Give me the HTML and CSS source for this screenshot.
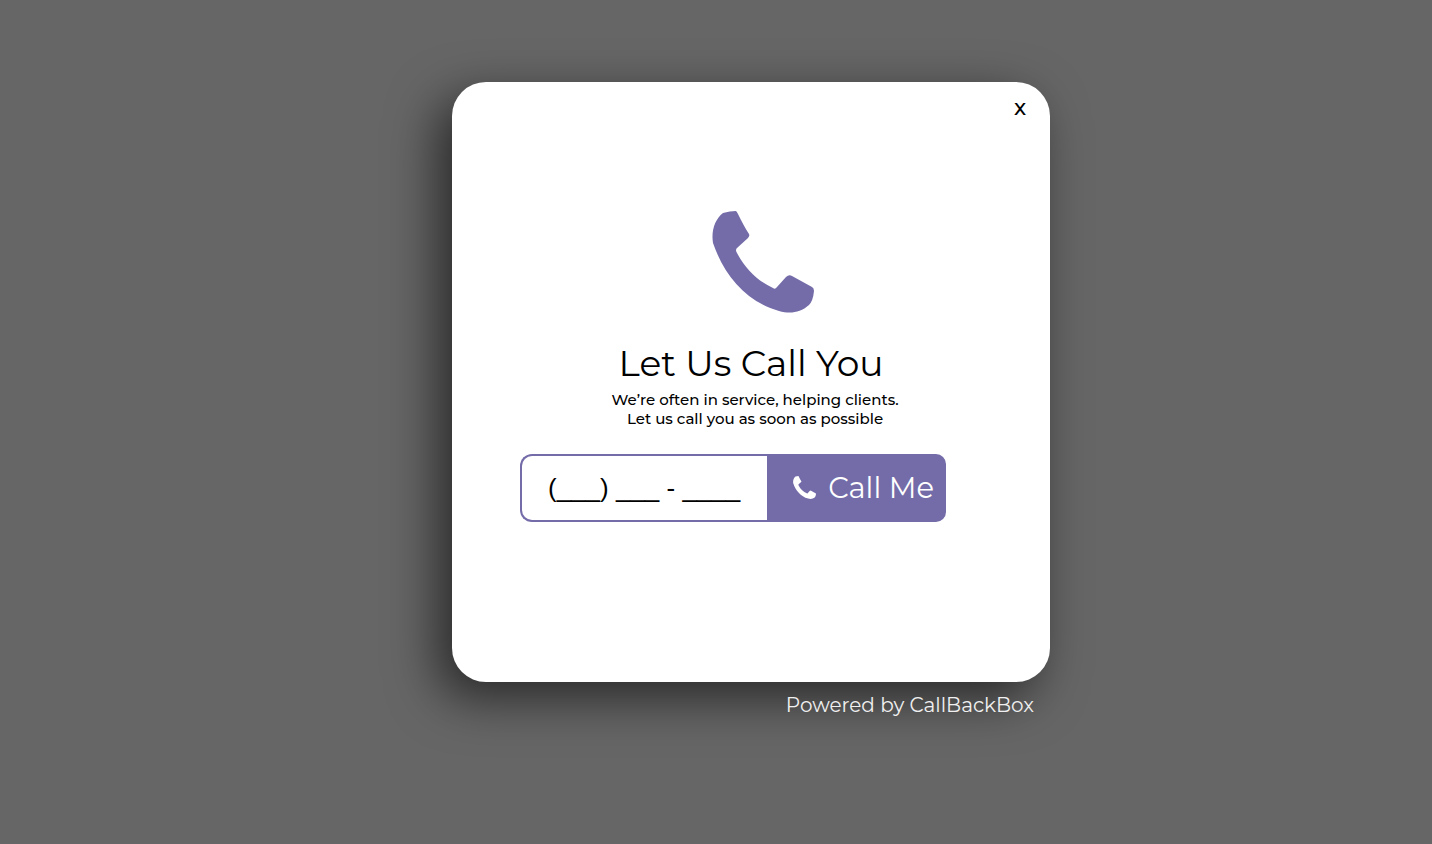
FILE: index.html
```html
<!DOCTYPE html>
<html lang="en">
<head>
<meta charset="utf-8">
<meta name="viewport" content="width=device-width, initial-scale=1">
<title>CallBackBox</title>
<link rel="stylesheet" href="styles.css">
</head>
<body>
<svg class="sprite" aria-hidden="true">
  <symbol id="phone" viewBox="0 0 102 102">
    <path d="M11 2Q18 0 24 0Q25 1 26 3C30 11 33 17 37 23Q38 25 36 27L25 37Q23 39 25 42C34 59 46 70 61 77Q63 79 65 76L74 66Q77 63 80 65L100 76Q102 77 102 80Q101 90 97 94C88 102 78 103 67 100C34 91 12 64 1 32C-1 20 3 8 11 2Z"/>
  </symbol>
</svg>
<div class="overlay">
  <main class="widget">
    <section class="card" role="dialog" aria-labelledby="title">
      <button class="close" type="button" aria-label="Close">x</button>
      <svg class="hero-icon" aria-hidden="true"><use href="#phone"/></svg>
      <h1 class="title" id="title">Let Us Call You</h1>
      <p class="lead">We’re often in service, helping clients.<br>Let us call you as soon as possible</p>
      <form class="call-form">
        <input class="phone-input" type="tel" aria-label="Phone number" value="(___) ___ - ____">
        <button class="call-button" type="button"><svg class="call-icon" aria-hidden="true"><use href="#phone"/></svg>Call Me</button>
      </form>
    </section>
    <p class="powered">Powered by CallBackBox</p>
  </main>
</div>
</body>
</html>
```
FILE: styles.css
```css
* { box-sizing: border-box; }
body {
  margin: 0;
  background: #666;
  font-family: Montserrat, Inter, "Open Sans", sans-serif;
  color: #000;
}
.sprite { position: absolute; width: 0; height: 0; }
.overlay {
  display: flex;
  justify-content: center;
  min-height: 100vh;
  padding: 82px 16px 40px 86px;
}
.widget { width: 100%; max-width: 598px; }
.card {
  display: flex;
  flex-direction: column;
  align-items: center;
  padding: 12px 16px 160px;
  border-radius: 34px;
  background: #fff;
  box-shadow: -14px 16px 50px rgba(0, 0, 0, .6);
}
.close {
  align-self: flex-end;
  width: 28px;
  height: 28px;
  padding: 0;
  border: 0;
  background: none;
  font: 500 22px/28px Montserrat, Inter, sans-serif;
  color: #000;
}
.hero-icon {
  width: 102px;
  height: 102px;
  margin: 89px 0 0 24px;
  fill: #736ca9;
}
.title {
  margin: 28px 0 0;
  font-size: 36px;
  line-height: 44px;
  font-weight: 400;
}
.lead {
  margin: 5px 0 0 8px;
  font-size: 15px;
  font-weight: 500;
  line-height: 19px;
  text-align: center;
}
.call-form {
  display: flex;
  width: 100%;
  max-width: 426px;
  margin: 26px 36px 0 0;
}
.phone-input {
  flex: 1;
  min-width: 0;
  height: 68px;
  padding: 0 0 0 26px;
  border: 2px solid #736ca9;
  border-right: 0;
  border-radius: 12px 0 0 12px;
  background: #fff;
  font: 400 26px "Liberation Sans", sans-serif;
  color: #000;
}
.call-button {
  display: flex;
  align-items: center;
  justify-content: flex-end;
  gap: 12px;
  width: 179px;
  padding: 0 12px 2px 0;
  border: 0;
  border-radius: 0 10px 10px 0;
  background: #736ca9;
  font: 400 29px Montserrat, Inter, sans-serif;
  color: #fff;
}
.call-icon { width: 23px; height: 23px; fill: #fff; }
.powered {
  margin: 11px 16px 0 0;
  font-size: 20px;
  line-height: 24px;
  text-align: right;
  color: #f0f0f0;
}
```
